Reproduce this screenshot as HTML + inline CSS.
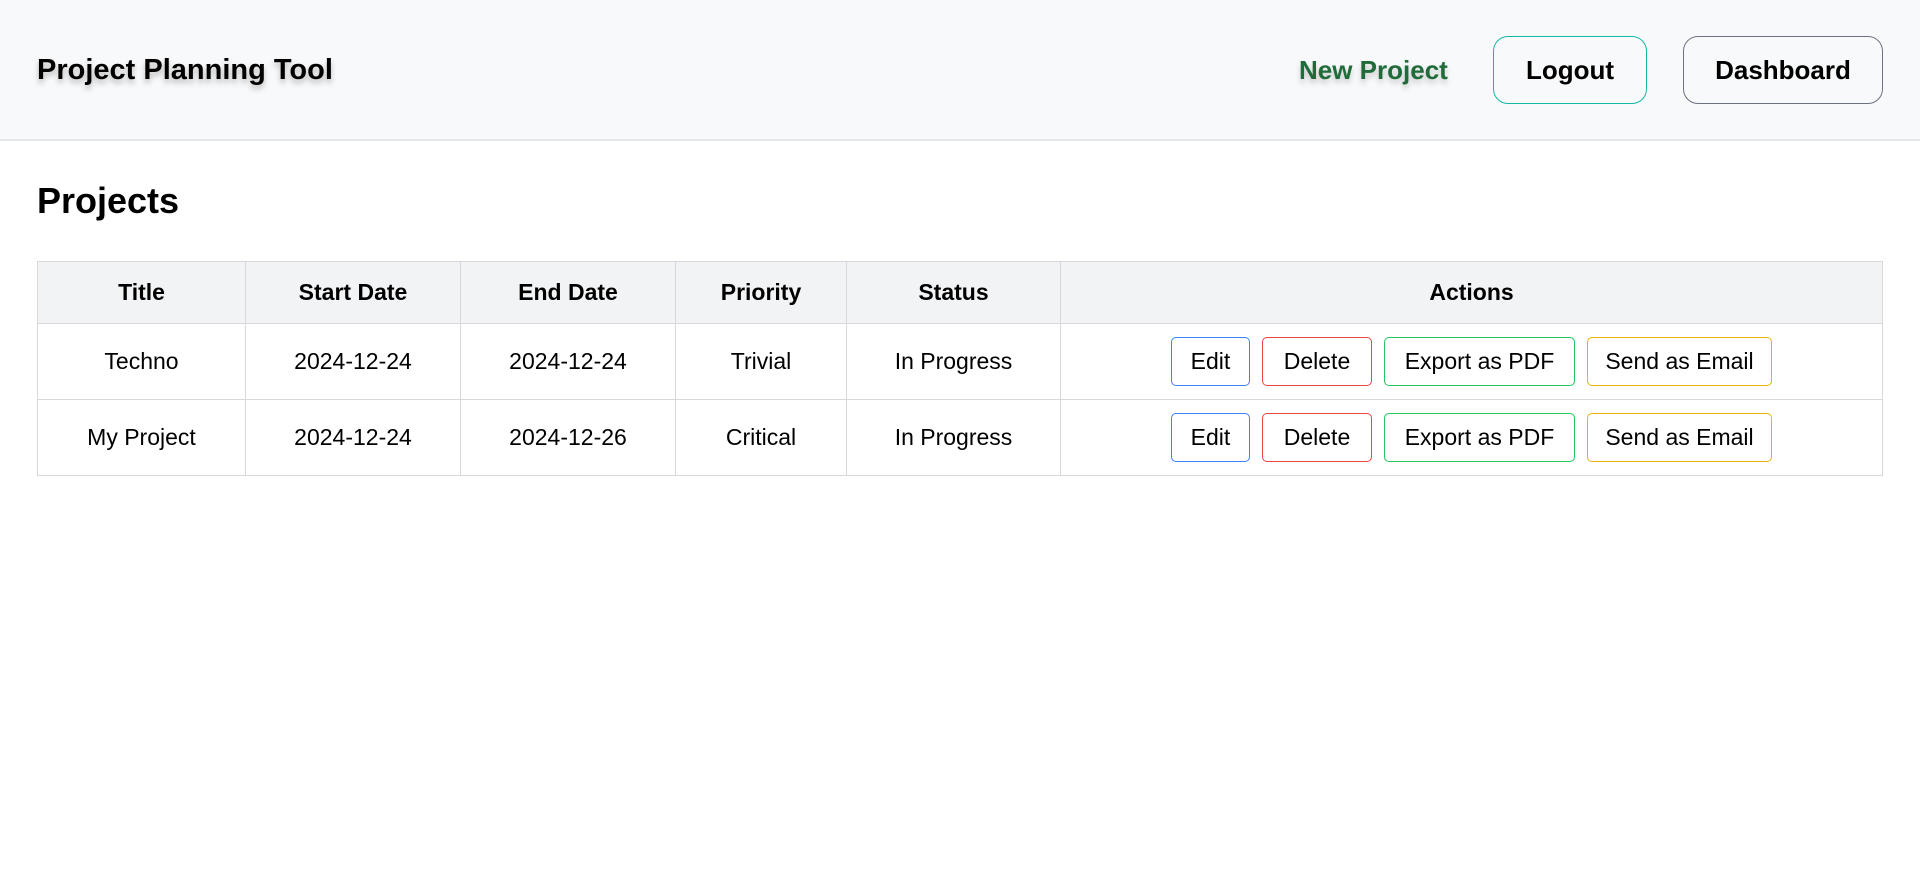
<!DOCTYPE html>
<html><head><meta charset="utf-8"><style>
*{box-sizing:border-box;margin:0;padding:0}
body{width:1920px;height:874px;background:#fff;font-family:"Liberation Sans","DejaVu Sans",sans-serif;color:#000;overflow:hidden;position:relative}
.hdr{position:absolute;left:0;top:0;width:1920px;height:141px;background:#f8f9fa;border-bottom:2px solid #e5e7eb}
.logo{position:absolute;left:37px;top:54px;font-size:29px;font-weight:bold;text-shadow:0 4px 6px rgba(0,0,0,.25)}
.np{position:absolute;left:1299px;top:55px;font-size:26px;font-weight:bold;color:#1f6b3a;text-shadow:0 4px 6px rgba(0,0,0,.2)}
.nb{position:absolute;top:36px;height:68px;border-radius:15px;font-size:26px;font-weight:bold;display:flex;align-items:center;justify-content:center;background:#f8f9fa}
h2{position:absolute;left:37px;top:180px;font-size:36px;font-weight:bold}
table{position:absolute;left:37px;top:261px;width:1846px;border-collapse:collapse;font-size:23px}
th,td{border:1px solid #d8d8dc;text-align:center}
th{background:#f2f3f5;height:62px;font-weight:bold}
td{height:76px}
.b{display:inline-block;height:49px;line-height:47px;border-radius:5px;border:1px solid;margin:0 6px;vertical-align:middle;font-size:23px}
</style></head><body>
<div class="hdr">
<div class="logo">Project Planning Tool</div>
<div class="np">New Project</div>
<div class="nb" style="left:1493px;width:154px;border:1px solid #14b8a6">Logout</div>
<div class="nb" style="left:1683px;width:200px;border:1px solid #6b7280">Dashboard</div>
</div>
<h2>Projects</h2>
<table>
<tr><th style="width:208px">Title</th><th style="width:215px">Start Date</th><th style="width:215px">End Date</th><th style="width:171px">Priority</th><th style="width:214px">Status</th><th>Actions</th></tr>
<tr><td>Techno</td><td>2024-12-24</td><td>2024-12-24</td><td>Trivial</td><td>In Progress</td><td><span class="b" style="width:79px;border-color:#3b82f6">Edit</span><span class="b" style="width:110px;border-color:#ef4444">Delete</span><span class="b" style="width:191px;border-color:#22c55e">Export as PDF</span><span class="b" style="width:185px;border-color:#eab308">Send as Email</span></td></tr>
<tr><td>My Project</td><td>2024-12-24</td><td>2024-12-26</td><td>Critical</td><td>In Progress</td><td><span class="b" style="width:79px;border-color:#3b82f6">Edit</span><span class="b" style="width:110px;border-color:#ef4444">Delete</span><span class="b" style="width:191px;border-color:#22c55e">Export as PDF</span><span class="b" style="width:185px;border-color:#eab308">Send as Email</span></td></tr>
</table>
</body></html>
